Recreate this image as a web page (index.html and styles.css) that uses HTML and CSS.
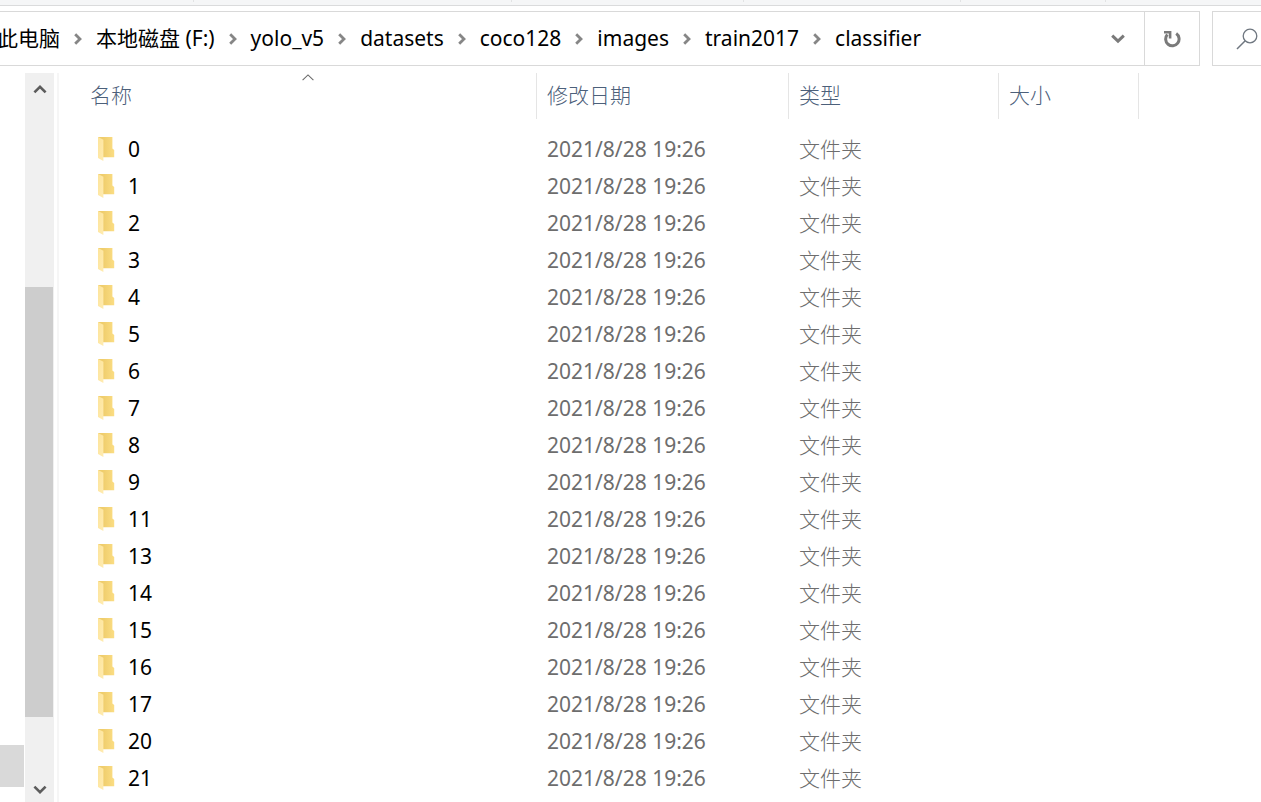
FILE: index.html
```html
<!DOCTYPE html>
<html lang="zh-CN">
<head>
  <meta charset="UTF-8">
  <title>classifier</title>
  <meta name="viewport" content="width=device-width,initial-scale=1">
  <link rel="stylesheet" href="styles.css">
</head>
<body>
  <svg class="sprite" aria-hidden="true">
    <defs>
      <linearGradient id="folder-back" x1="0" y1="0" x2="1" y2="0">
        <stop offset="0.3" stop-color="#efcd6c"/>
        <stop offset="1" stop-color="#fbdd83"/>
      </linearGradient>
      <linearGradient id="folder-flap" x1="0" y1="0" x2="1" y2="1">
        <stop offset="0" stop-color="#fde49a"/>
        <stop offset="1" stop-color="#ffebb0"/>
      </linearGradient>
      <symbol id="folder" viewBox="0 0 18 26">
        <path d="M1 1H15.4V12.6L17.2 14V21.2H5Z" fill="url(#folder-back)"/>
        <path d="M1 1L6.4 3.8V25L1 22Z" fill="url(#folder-flap)"/>
      </symbol>
      <symbol id="chevron" viewBox="0 0 8 12">
        <path d="M1.2 1.2L6 6L1.2 10.8" fill="none" stroke="#868686" stroke-width="2.8"/>
      </symbol>
    </defs>
  </svg>

  <div class="ribbon">
    <span class="group group-1"></span>
    <span class="group group-2"></span>
    <span class="group group-3"></span>
    <span class="group group-4"></span>
    <span class="group group-5"></span>
  </div>

  <div class="toolbar">
    <div class="address">
      <nav class="crumbs">
        <a href="#">此电脑</a>
        <svg class="chevron"><use href="#chevron"/></svg>
        <a href="#">本地磁盘 (F:)</a>
        <svg class="chevron"><use href="#chevron"/></svg>
        <a href="#">yolo_v5</a>
        <svg class="chevron"><use href="#chevron"/></svg>
        <a href="#">datasets</a>
        <svg class="chevron"><use href="#chevron"/></svg>
        <a href="#">coco128</a>
        <svg class="chevron"><use href="#chevron"/></svg>
        <a href="#">images</a>
        <svg class="chevron"><use href="#chevron"/></svg>
        <a href="#">train2017</a>
        <svg class="chevron"><use href="#chevron"/></svg>
        <a href="#">classifier</a>
      </nav>
      <button class="history-btn" aria-label="以前的位置">
        <svg width="14" height="10" viewBox="0 0 14 10"><path d="M1.2 1.6L7 7.2L12.8 1.6" fill="none" stroke="#7a7a7a" stroke-width="3"/></svg>
      </button>
      <button class="refresh-btn" aria-label="刷新">
        <svg width="18" height="18" viewBox="0 0 18 18">
          <path d="M4.4 4.6A6.7 6.7 0 1 0 13.2 3.6" fill="none" stroke="#7a7a7a" stroke-width="3"/>
          <path d="M1 1H8.4V8.6H5.8V3.6H1Z" fill="#7a7a7a"/>
        </svg>
      </button>
    </div>
    <button class="search-btn" aria-label="搜索">
      <svg width="22" height="22" viewBox="0 0 22 22">
        <circle cx="14" cy="8" r="6.8" fill="none" stroke="#6f7780" stroke-width="1.3"/>
        <path d="M9.2 12.8L1 21" fill="none" stroke="#6f7780" stroke-width="1.5"/>
      </svg>
    </button>
  </div>

  <div class="main">
    <div class="tree">
      <div class="tree-selected"></div>
    </div>
    <div class="scrollbar">
      <button class="scroll-btn" aria-label="向上滚动">
        <svg width="14" height="10" viewBox="0 0 14 10"><path d="M1.4 8.4L7 2.8L12.6 8.4" fill="none" stroke="#5c5c5c" stroke-width="2.6"/></svg>
      </button>
      <div class="track">
        <div class="thumb"></div>
      </div>
      <button class="scroll-btn" aria-label="向下滚动">
        <svg width="14" height="10" viewBox="0 0 14 10"><path d="M1.4 1.6L7 7.2L12.6 1.6" fill="none" stroke="#5c5c5c" stroke-width="2.6"/></svg>
      </button>
    </div>
    <div class="files">
      <table class="file-table">
        <thead>
          <tr>
            <th class="col-name">名称
              <svg class="sort" width="12" height="7" viewBox="0 0 12 7"><path d="M0.6 6.2L6 0.9L11.4 6.2" fill="none" stroke="#6a6a6a" stroke-width="1.1"/></svg>
            </th>
            <th class="col-date">修改日期</th>
            <th class="col-type">类型</th>
            <th class="col-size">大小</th>
            <td></td>
          </tr>
        </thead>
        <tbody id="rows"></tbody>
      </table>
    </div>
  </div>

  <script>
    const names = [0, 1, 2, 3, 4, 5, 6, 7, 8, 9, 11, 13, 14, 15, 16, 17, 20, 21];
    const icon = '<svg class="folder"><use href="#folder"/></svg>';

    let html = '';
    for (let name of names) {
      html += `<tr>
        <td><div class="name">${icon}${name}</div></td>
        <td class="info">2021/8/28 19:26</td>
        <td class="info type">文件夹</td>
        <td></td>
        <td></td>
      </tr>`;
    }
    // next row, cut off by the window edge
    html += `<tr><td><div class="name">${icon}</div></td><td colspan="4"></td></tr>`;
    document.getElementById('rows').innerHTML = html;
  </script>
</body>
</html>
```
FILE: styles.css
```css
* {
  box-sizing: border-box;
}
body {
  margin: 0;
  height: 100vh;
  display: flex;
  flex-direction: column;
  overflow: hidden;
  background: #fff;
  color: #000;
  font-family: "Noto Sans", "Noto Sans CJK SC", sans-serif;
  font-size: 21px;
  line-height: 36px;
}
button {
  display: flex;
  align-items: center;
  justify-content: center;
  padding: 0;
  border: none;
  background: none;
}
.sprite {
  position: absolute;
  width: 0;
  height: 0;
}

.ribbon {
  flex: none;
  display: flex;
  height: 6px;
  padding-bottom: 3px;
  background: #f5f6f7;
  border-bottom: 1px solid #dadbdc;
}
.group {
  border-right: 1px solid #e2e3e4;
}
.group-1 { width: 194px; }
.group-2 { width: 318px; }
.group-3 { width: 232px; }
.group-4 { width: 217px; }
.group-5 { width: 145px; }

.toolbar {
  flex: none;
  display: flex;
  gap: 12px;
  height: 55px;
  margin: 5px 0 7px;
}
.address {
  flex: 1;
  display: flex;
  margin-left: -4px;
  border: 1px solid #d9d9d9;
}
.crumbs {
  flex: 1;
  display: flex;
  align-items: center;
  gap: 14px;
  white-space: nowrap;
}
.crumbs a {
  padding-bottom: 2px;
  color: #000;
  text-decoration: none;
}
.chevron {
  flex: none;
  width: 8px;
  height: 12px;
}
.history-btn {
  width: 52px;
}
.refresh-btn {
  width: 55px;
  border-left: 1px solid #d9d9d9;
}
.search-btn {
  width: 49px;
  padding-left: 20px;
  border: 1px solid #d9d9d9;
  border-right: none;
}

.main {
  flex: 1;
  min-height: 0;
  display: flex;
}
.tree {
  width: 25px;
  display: flex;
  flex-direction: column;
  justify-content: flex-end;
  padding: 0 1px 15px 0;
}
.tree-selected {
  height: 42px;
  background: #d9d9d9;
}
.scrollbar {
  width: 29px;
  display: flex;
  flex-direction: column;
  background: #f0f0f0;
}
.scroll-btn {
  height: 32px;
}
.scroll-btn:last-child {
  height: 24px;
}
.track {
  flex: 1;
  padding-right: 1px;
}
.thumb {
  height: 64%;
  background: #cdcdcd;
}
.track::before {
  content: "";
  display: block;
  height: 27%;
}
.files {
  flex: 1;
  margin-left: 3px;
  padding-left: 21px;
  border-left: 2px solid #f6f6f6;
  overflow: hidden;
}

.file-table {
  width: 100%;
  table-layout: fixed;
  border-collapse: separate;
  border-spacing: 0;
}
.file-table th {
  position: relative;
  height: 46px;
  padding: 0 10px 2px;
  border-right: 1px solid #e5e5e5;
  color: #4c607a;
  font-weight: 300;
  text-align: left;
}
.file-table .col-name { width: 457px; }
.col-date { width: 252px; }
.col-type { width: 210px; }
.col-size { width: 140px; }
.sort {
  position: absolute;
  top: 1px;
  left: calc(50% - 6px);
}
.file-table tbody::before {
  content: "";
  display: block;
  height: 11px;
}
.file-table tbody td {
  height: 37px;
  padding: 0;
}
.file-table tbody .info {
  padding-left: 10px;
  color: #6d6d6d;
}
.file-table .type {
  font-weight: 300;
}
.name {
  display: flex;
  align-items: center;
  gap: 13px;
  padding-left: 17px;
}
.folder {
  width: 18px;
  height: 26px;
}
```
